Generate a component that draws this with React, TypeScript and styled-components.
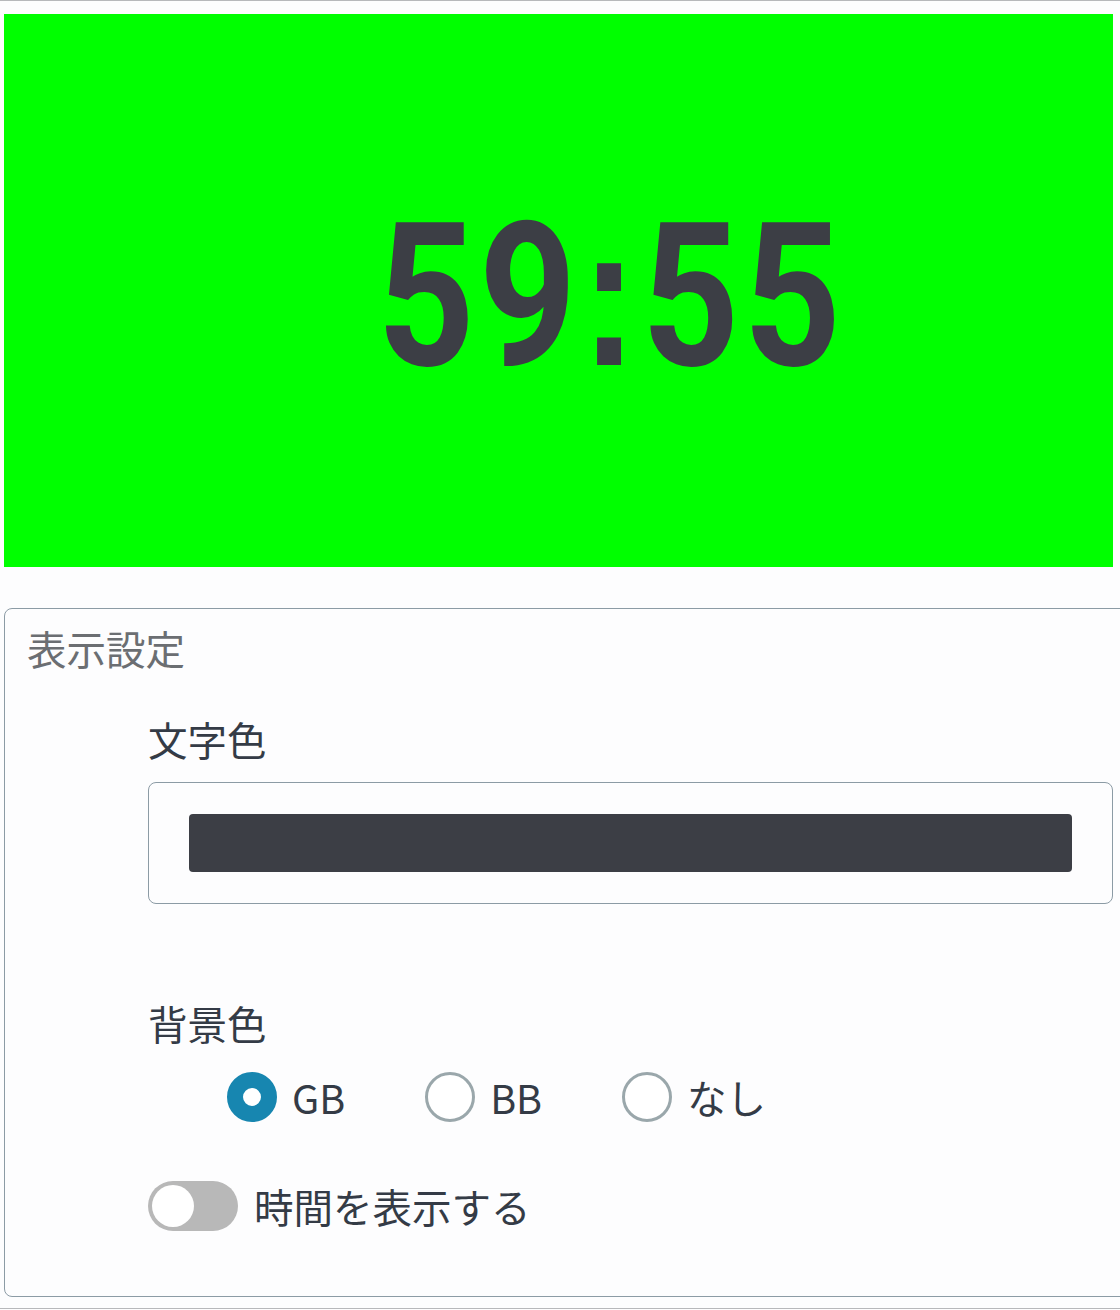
import React, { useState } from 'react';
import styled, { createGlobalStyle } from 'styled-components';

const GlobalStyle = createGlobalStyle`
  html, body {
    margin: 0;
    padding: 0;
    overflow: hidden;
    background: #fdfdfe;
  }
  body {
    font-family: 'Noto Sans CJK JP', 'Noto Sans', sans-serif;
    color: #343b46;
  }
`;

const Page = styled.div`
  width: 1120px;
`;

const Rule = styled.div`
  height: 1px;
  background: #b7b8bb;
`;

const Screen = styled.div<{ $bg: string }>`
  margin: 13px 0 0 4px;
  width: 1109px;
  height: 553px;
  background: ${(p) => p.$bg};
  display: flex;
  align-items: center;
  justify-content: center;
  padding-left: 106px;
  box-sizing: border-box;
`;

const Timer = styled.div<{ $color: string }>`
  font-family: Roboto, 'Liberation Sans', sans-serif;
  font-weight: 700;
  font-size: 200px;
  letter-spacing: 5px;
  line-height: 1;
  color: ${(p) => p.$color};
  transform: scaleX(0.85);
  margin-top: 11px;
`;

const Colon = styled.span`
  font-family: 'Liberation Sans', Arial, sans-serif;
`;

const Panel = styled.fieldset`
  margin: 41px 0 0 4px;
  width: 1140px;
  border: 1.5px solid #8c9ba5;
  border-radius: 8px;
  padding: 9px 0 60px 22px;
  box-sizing: border-box;
`;

const PanelTitle = styled.div`
  font-size: 39.5px;
  line-height: 60px;
  color: #6b6e72;
`;

const Body = styled.div`
  padding-left: 121px;
`;

const Label = styled.div<{ $top: number }>`
  font-size: 39.5px;
  line-height: 60px;
  margin-top: ${(p) => p.$top}px;
`;

const ColorBox = styled.div`
  margin-top: 13px;
  width: 965px;
  height: 122px;
  border: 1.5px solid #8c9ba5;
  border-radius: 8px;
  box-sizing: border-box;
  padding: 31px 40px;
`;

const Swatch = styled.div<{ $color: string }>`
  height: 100%;
  border-radius: 4px;
  background: ${(p) => p.$color};
`;

const RadioRow = styled.div`
  margin-top: 14px;
  padding-left: 79px;
  display: flex;
  gap: 80px;
`;

const RadioItem = styled.label`
  display: flex;
  align-items: center;
  gap: 15px;
  font-size: 39.5px;
  line-height: 60px;
  cursor: pointer;
`;

const RadioDot = styled.span<{ $on: boolean }>`
  width: 50px;
  height: 50px;
  border-radius: 50%;
  box-sizing: border-box;
  border: ${(p) => (p.$on ? '16px solid #1786b0' : '3.5px solid #9aa7ab')};
  background: #fff;
`;

const ToggleRow = styled.label`
  margin-top: 49px;
  display: flex;
  align-items: center;
  gap: 16px;
  font-size: 39.5px;
  line-height: 60px;
  cursor: pointer;
`;

const Track = styled.span<{ $on: boolean }>`
  width: 90px;
  height: 50px;
  border-radius: 25px;
  background: ${(p) => (p.$on ? '#1786b0' : '#b8b8b8')};
  display: flex;
  align-items: center;
  padding: 0 4px;
  box-sizing: border-box;
  justify-content: ${(p) => (p.$on ? 'flex-end' : 'flex-start')};
`;

const Knob = styled.span`
  width: 42px;
  height: 42px;
  border-radius: 50%;
  background: #fff;
`;

const BottomRule = styled(Rule)`
  margin-top: 11px;
`;

const backgrounds = [
  { key: 'GB', label: 'GB', color: '#00ff00' },
  { key: 'BB', label: 'BB', color: '#0000ff' },
  { key: 'none', label: 'なし', color: 'transparent' },
];

const App: React.FC = () => {
  const [bg, setBg] = useState('GB');
  const [showTime, setShowTime] = useState(false);
  const textColor = '#3c3e45';
  const bgColor = backgrounds.find((b) => b.key === bg)?.color ?? '#00ff00';

  return (
    <Page>
      <GlobalStyle />
      <Rule />
      <Screen $bg={bgColor}>
        <Timer $color={textColor}>
          59<Colon>:</Colon>55
        </Timer>
      </Screen>
      <Panel>
        <PanelTitle>表示設定</PanelTitle>
        <Body>
          <Label $top={31}>文字色</Label>
          <ColorBox>
            <Swatch $color={textColor} />
          </ColorBox>
          <Label $top={89}>背景色</Label>
          <RadioRow>
            {backgrounds.map((b) => (
              <RadioItem key={b.key} onClick={() => setBg(b.key)}>
                <RadioDot $on={bg === b.key} />
                {b.label}
              </RadioItem>
            ))}
          </RadioRow>
          <ToggleRow onClick={() => setShowTime(!showTime)}>
            <Track $on={showTime}>
              <Knob />
            </Track>
            時間を表示する
          </ToggleRow>
        </Body>
      </Panel>
      <BottomRule />
    </Page>
  );
};

export default App;
